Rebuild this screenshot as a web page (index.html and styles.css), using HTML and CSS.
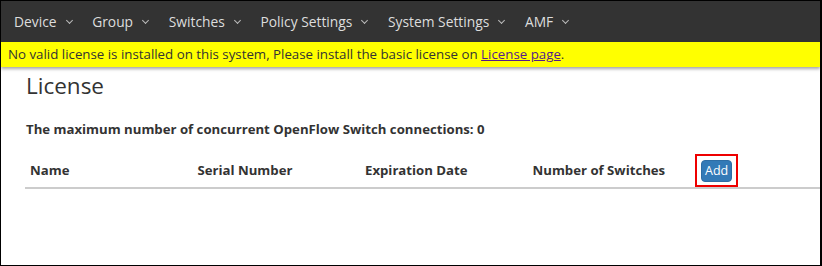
FILE: index.html
```html
<!DOCTYPE html>
<html lang="en">
<head>
    <meta charset="UTF-8">
    <title>License</title>
    <link rel="stylesheet" href="styles.css">
</head>
<body>
    <div class="frame">
        <nav class="navbar">
            <ul class="nav-list">
                <li class="nav-item">Device <span class="caret"></span></li>
                <li class="nav-item">Group <span class="caret"></span></li>
                <li class="nav-item">Switches <span class="caret"></span></li>
                <li class="nav-item">Policy Settings <span class="caret"></span></li>
                <li class="nav-item">System Settings <span class="caret"></span></li>
                <li class="nav-item">AMF <span class="caret"></span></li>
            </ul>
        </nav>
        <div class="license-warning">
            No valid license is installed on this system, Please install the basic license on <a href="#">License page</a>.
        </div>
        <div class="content">
            <h1 class="page-title">License</h1>
            <p class="max-conn">The maximum number of concurrent OpenFlow Switch connections: 0</p>
            <div class="license-table">
                <div class="table-head">
                    <div class="col">Name</div>
                    <div class="col">Serial Number</div>
                    <div class="col">Expiration Date</div>
                    <div class="col">Number of Switches</div>
                    <div class="col col-action">
                        <span class="highlight"><button class="btn-add">Add</button></span>
                    </div>
                </div>
            </div>
        </div>
    </div>
</body>
</html>
```

FILE: styles.css
```css
html, body {
    margin: 0;
    padding: 0;
}

body {
    font-family: "Open Sans", "Noto Sans", sans-serif;
    color: #333;
    background: #fff;
}

.frame {
    width: 822px;
    height: 266px;
    box-sizing: border-box;
    border: 1px solid #000;
    border-right-width: 2px;
    overflow: hidden;
}

.navbar {
    background: #333;
    height: 41px;
}

.nav-list {
    list-style: none;
    margin: 0;
    padding: 0 0 0 13px;
    display: flex;
    height: 100%;
    align-items: center;
}

.nav-item {
    color: #ddd;
    font-size: 13.8px;
    margin-right: 20.7px;
    display: flex;
    align-items: center;
}

.caret {
    display: inline-block;
    width: 4px;
    height: 4px;
    border-right: 1px solid #bbb;
    border-bottom: 1px solid #bbb;
    transform: rotate(45deg);
    margin: -3px 0 0 10px;
}

.license-warning {
    background: #ff0;
    color: #333;
    font-size: 13.3px;
    height: 25px;
    line-height: 25px;
    padding-left: 7px;
    box-shadow: 0 2px 3px rgba(0, 0, 0, 0.35);
    position: relative;
    white-space: nowrap;
}

.license-warning a {
    color: #551a8b;
}

.content {
    padding: 0 0 0 24px;
}

.page-title {
    font-weight: normal;
    font-size: 22.5px;
    margin: 5px 0 0 1px;
    line-height: 28px;
}

.max-conn {
    font-weight: bold;
    font-size: 13.2px;
    margin: 20px 0 0 1px;
}

.license-table {
    margin-top: 15px;
}

.table-head {
    display: flex;
    align-items: center;
    height: 34px;
    border-bottom: 2px solid #ccc;
    font-weight: bold;
    font-size: 13.2px;
}

.col {
    flex: 0 0 167.5px;
    padding-left: 5px;
    box-sizing: border-box;
}

.col-action {
    padding-left: 0;
}

.highlight {
    display: inline-block;
    border: 2px solid #e00;
    padding: 4px 4px 3px;
}

.btn-add {
    background: #337ab7;
    color: #fff;
    border: 1px solid #2e6da4;
    border-radius: 4px;
    font-family: inherit;
    font-size: 12.5px;
    line-height: 16px;
    padding: 2px 3px;
    display: block;
}
```
